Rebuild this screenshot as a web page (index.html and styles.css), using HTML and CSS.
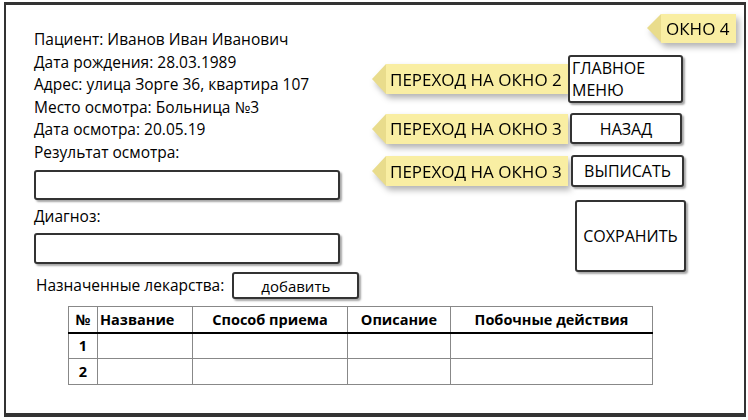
FILE: index.html
```html
<!DOCTYPE html>
<html lang="ru">
<head>
  <meta charset="UTF-8" />
  <title>Окно 4 — осмотр пациента</title>
  <link rel="stylesheet" href="styles.css">
</head>
<body>
  <div class="window">
    <div class="top">
      <div class="patient">
        <p>Пациент: Иванов Иван Иванович</p>
        <p>Дата рождения: 28.03.1989</p>
        <p>Адрес: улица Зорге 36, квартира 107</p>
        <p>Место осмотра: Больница №3</p>
        <p>Дата осмотра: 20.05.19</p>
        <p>Результат осмотра:</p>
        <div class="field"></div>
        <p>Диагноз:</p>
        <div class="field field-tall"></div>
        <div class="meds">
          <span>Назначенные лекарства:</span>
          <button class="btn add">добавить</button>
        </div>
      </div>

      <div class="actions">
        <div class="tag-row">
          <span class="note tag">ОКНО 4</span>
        </div>
        <div class="action-row first">
          <span class="note">ПЕРЕХОД НА ОКНО 2</span>
          <button class="btn menu">ГЛАВНОЕ<br>МЕНЮ</button>
        </div>
        <div class="action-row second">
          <span class="note">ПЕРЕХОД НА ОКНО 3</span>
          <button class="btn back">НАЗАД</button>
        </div>
        <div class="action-row third">
          <span class="note">ПЕРЕХОД НА ОКНО 3</span>
          <button class="btn discharge">ВЫПИСАТЬ</button>
        </div>
        <button class="btn save">СОХРАНИТЬ</button>
      </div>
    </div>

    <table class="drugs">
      <thead>
        <tr>
          <th class="num">№</th>
          <th class="name">Название</th>
          <th class="way">Способ приема</th>
          <th class="desc">Описание</th>
          <th class="side">Побочные действия</th>
        </tr>
      </thead>
      <tbody>
        <tr><td class="num">1</td><td></td><td></td><td></td><td></td></tr>
        <tr><td class="num">2</td><td></td><td></td><td></td><td></td></tr>
      </tbody>
    </table>
  </div>
</body>
</html>
```

FILE: styles.css
```css
* {
  margin: 0;
  padding: 0;
  box-sizing: border-box;
}

body {
  font-family: "Open Sans", sans-serif;
  color: #000;
  background: #fff;
}

.window {
  margin: 2px 0 0 4px;
  width: 742px;
  height: 415px;
  border: 2px solid #333;
  border-top-width: 3px;
  border-bottom-width: 4px;
}

.top {
  display: flex;
  padding-left: 28px;
}

/* left column: patient card */
.patient {
  width: 306px;
  padding-top: 23px;
  font-size: 15.5px;
  line-height: 22.6px;
}

.field {
  height: 30px;
  margin: 6px 0 5px;
  background: #fff;
  border: 2px solid #333;
  border-radius: 3px;
  box-shadow: 2px 2px 2px rgba(0, 0, 0, 0.35);
}

.field-tall {
  height: 31px;
  margin-bottom: 8px;
}

.meds {
  display: flex;
  align-items: center;
  padding-left: 2px;
  white-space: nowrap;
}

.btn {
  position: relative;
  font-family: "Open Sans", sans-serif;
  font-size: 16px;
  color: #000;
  background: #fff;
  border: 2px solid #333;
  border-radius: 3px;
  box-shadow: 2px 2px 2px rgba(0, 0, 0, 0.35);
}

.add {
  flex-shrink: 0;
  margin-left: 8px;
  width: 127px;
  height: 27px;
  font-size: 15px;
}

/* right column: navigation */
.actions {
  margin-left: 32px;
  width: 364px;
  padding-top: 9px;
}

.tag-row {
  display: flex;
  justify-content: flex-end;
}

.note {
  position: relative;
  display: flex;
  align-items: center;
  height: 30px;
  margin-left: 14px;
  padding-left: 4px;
  font-size: 17px;
  white-space: nowrap;
  background: #f9eea3;
  filter: drop-shadow(3px 4px 3px rgba(0, 0, 0, 0.3));
}

.note::before {
  content: "";
  position: absolute;
  left: -14px;
  top: 0;
  border-style: solid;
  border-width: 15px 14px 15px 0;
  border-color: transparent #e9dc8c transparent transparent;
}

.tag {
  width: 75px;
  height: 29px;
  padding-left: 5px;
}

.tag::before {
  border-width: 14.5px 14px 14.5px 0;
}

.action-row {
  display: flex;
  align-items: center;
}

.action-row .note {
  width: 182px;
}

.first {
  margin-top: 12px;
}

.second {
  margin-top: 10px;
}

.third {
  margin-top: 11px;
}

.menu {
  width: 115px;
  height: 48px;
  padding: 0 2px;
  text-align: left;
  line-height: 22px;
}

.back {
  width: 112px;
  height: 31px;
  margin-left: 2px;
}

.discharge {
  width: 113px;
  height: 32px;
  margin-left: 3px;
}

.save {
  display: block;
  width: 111px;
  height: 72px;
  margin: 13px 0 0 203px;
}

/* medicine table */
.drugs {
  margin: 7px 0 0 62px;
  border-collapse: collapse;
  font-size: 14.5px;
}

.drugs th,
.drugs td {
  height: 26px;
  border: 1px solid #888;
  text-align: center;
}

.drugs th {
  font-weight: bold;
  border-bottom: 2px solid #000;
}

.drugs td.num {
  font-weight: bold;
}

.drugs .num {
  width: 29px;
}

.drugs .name {
  width: 95px;
  text-align: left;
  padding-left: 2px;
}

.drugs .way {
  width: 155px;
}

.drugs .desc {
  width: 103px;
}

.drugs .side {
  width: 202px;
}
```
